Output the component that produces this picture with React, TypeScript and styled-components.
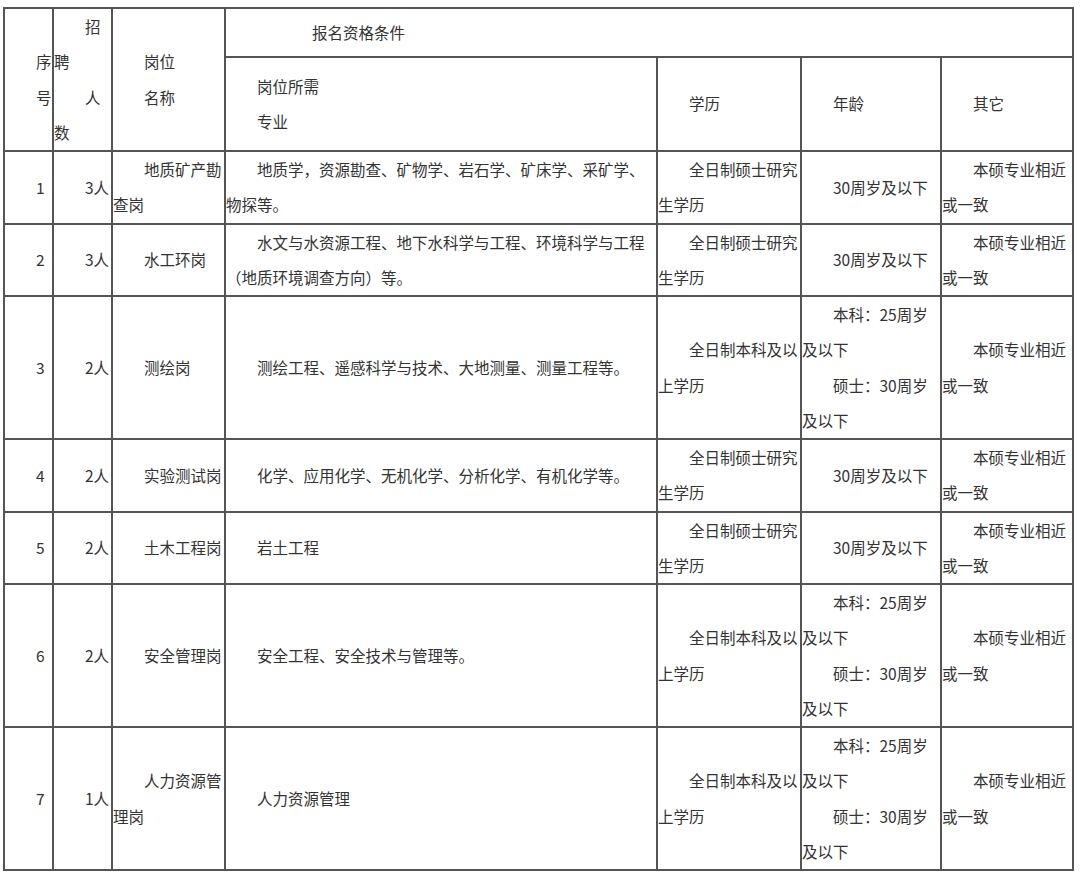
import React from 'react';
import styled, {createGlobalStyle} from "styled-components";

const GlobalStyle = createGlobalStyle`
    body {
        margin: 0;
        background: #fff;
        font-family: "Noto Sans CJK SC", "Noto Sans", sans-serif;
    }
`;

type Row = {
    no: string;
    count: string;
    name: string;
    major: string;
    edu: string;
    age: string[];
    other: string;
};

const MASTER = '全日制硕士研究生学历';
const BACHELOR = '全日制本科及以上学历';
const AGE_MASTER = ['30周岁及以下'];
const AGE_BOTH = ['本科：25周岁及以下', '硕士：30周岁及以下'];
const OTHER = '本硕专业相近或一致';

const rows: Row[] = [
    {no: '1', count: '3人', name: '地质矿产勘查岗', major: '地质学，资源勘查、矿物学、岩石学、矿床学、采矿学、物探等。', edu: MASTER, age: AGE_MASTER, other: OTHER},
    {no: '2', count: '3人', name: '水工环岗', major: '水文与水资源工程、地下水科学与工程、环境科学与工程（地质环境调查方向）等。', edu: MASTER, age: AGE_MASTER, other: OTHER},
    {no: '3', count: '2人', name: '测绘岗', major: '测绘工程、遥感科学与技术、大地测量、测量工程等。', edu: BACHELOR, age: AGE_BOTH, other: OTHER},
    {no: '4', count: '2人', name: '实验测试岗', major: '化学、应用化学、无机化学、分析化学、有机化学等。', edu: MASTER, age: AGE_MASTER, other: OTHER},
    {no: '5', count: '2人', name: '土木工程岗', major: '岩土工程', edu: MASTER, age: AGE_MASTER, other: OTHER},
    {no: '6', count: '2人', name: '安全管理岗', major: '安全工程、安全技术与管理等。', edu: BACHELOR, age: AGE_BOTH, other: OTHER},
    {no: '7', count: '1人', name: '人力资源管理岗', major: '人力资源管理', edu: BACHELOR, age: AGE_BOTH, other: OTHER},
];

const widths = [49, 59, 113, 432, 144, 140, 132];

export default function App() {
    return (
        <Page>
            <GlobalStyle/>
            <Table>
                <colgroup>
                    {widths.map((w, i) => <col key={i} style={{width: w}}/>)}
                </colgroup>
                <tbody>
                <tr>
                    <Cell rowSpan={2}>
                        <P>序</P>
                        <P>号</P>
                    </Cell>
                    <Cell rowSpan={2}>
                        <P>招聘</P>
                        <P>人数</P>
                    </Cell>
                    <Cell rowSpan={2}>
                        <P>岗位</P>
                        <P>名称</P>
                    </Cell>
                    <Cell colSpan={4} $pad={55}>
                        <P>报名资格条件</P>
                    </Cell>
                </tr>
                <tr>
                    <Cell>
                        <P>岗位所需</P>
                        <P>专业</P>
                    </Cell>
                    <Cell><P>学历</P></Cell>
                    <Cell><P>年龄</P></Cell>
                    <Cell><P>其它</P></Cell>
                </tr>
                {rows.map(r => (
                    <tr key={r.no}>
                        <Cell><P>{r.no}</P></Cell>
                        <Cell><P>{r.count}</P></Cell>
                        <Cell><P>{r.name}</P></Cell>
                        <Cell><P>{r.major}</P></Cell>
                        <Cell><P>{r.edu}</P></Cell>
                        <Cell>
                            {r.age.map(a => <P key={a}>{a}</P>)}
                        </Cell>
                        <Cell><P>{r.other}</P></Cell>
                    </tr>
                ))}
                </tbody>
            </Table>
        </Page>
    );
}

const Page = styled.div`
    padding: 7px 0 0 3px;
    background: #fff;
`;

const Table = styled.table`
    border-collapse: collapse;
    table-layout: fixed;
    width: 1071px;
    color: #333;
    font-size: 15.5px;
    line-height: 35.25px;
`;

const Cell = styled.td<{ $pad?: number }>`
    border: 2px solid #555;
    padding: 0 0 0 ${p => p.$pad ?? 0}px;
    vertical-align: middle;
    text-align: left;
    word-break: break-all;
`;

const P = styled.p`
    margin: 0;
    text-indent: 2em;
`;
